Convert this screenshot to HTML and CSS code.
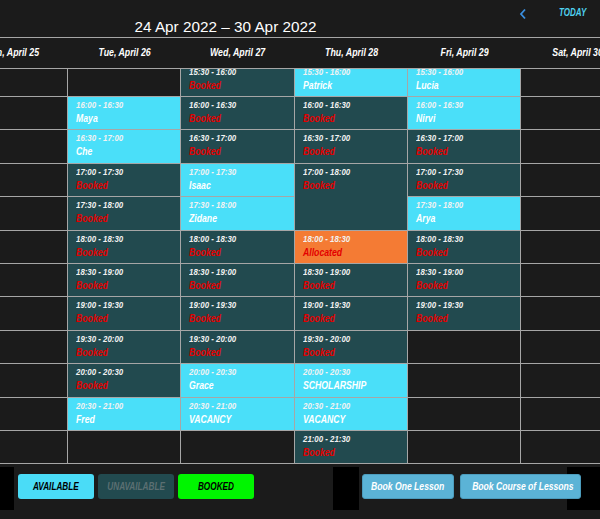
FILE: index.html
```html
<!DOCTYPE html>
<html lang="en">
<head>
    <meta charset="UTF-8">
    <meta name="viewport" content="width=device-width, initial-scale=1.0">
    <title>Lesson Timetable</title>
    <link rel="stylesheet" href="styles.css">
</head>
<body>
    <div class="topbar">
        <h1 class="range">24 Apr 2022 – 30 Apr 2022</h1>
        <div class="nav">
            <svg class="prev" width="8" height="12" viewBox="0 0 8 12">
                <polyline points="6,1.5 2,6 6,10.5" fill="none" stroke="#3a8fe0" stroke-width="1.8"/>
            </svg>
            <span class="today">TODAY</span>
        </div>
    </div>

    <div class="day-header">
        <div class="days">
            <div class="day">Mon, April 25</div>
            <div class="day">Tue, April 26</div>
            <div class="day">Wed, April 27</div>
            <div class="day">Thu, April 28</div>
            <div class="day">Fri, April 29</div>
            <div class="day">Sat, April 30</div>
        </div>
    </div>

    <div class="grid-view">
        <div class="week">
            <!-- Mon -->
            <div class="day-col">
                <div class="slot"></div><div class="slot"></div><div class="slot"></div><div class="slot"></div>
                <div class="slot"></div><div class="slot"></div><div class="slot"></div><div class="slot"></div>
                <div class="slot"></div><div class="slot"></div><div class="slot"></div><div class="slot"></div>
            </div>
            <!-- Tue -->
            <div class="day-col">
                <div class="slot"></div>
                <div class="slot open"><span class="time">16:00 - 16:30</span><span class="who">Maya</span></div>
                <div class="slot open"><span class="time">16:30 - 17:00</span><span class="who">Che</span></div>
                <div class="slot booked"><span class="time">17:00 - 17:30</span><span class="who">Booked</span></div>
                <div class="slot booked"><span class="time">17:30 - 18:00</span><span class="who">Booked</span></div>
                <div class="slot booked"><span class="time">18:00 - 18:30</span><span class="who">Booked</span></div>
                <div class="slot booked"><span class="time">18:30 - 19:00</span><span class="who">Booked</span></div>
                <div class="slot booked"><span class="time">19:00 - 19:30</span><span class="who">Booked</span></div>
                <div class="slot booked"><span class="time">19:30 - 20:00</span><span class="who">Booked</span></div>
                <div class="slot booked"><span class="time">20:00 - 20:30</span><span class="who">Booked</span></div>
                <div class="slot open"><span class="time">20:30 - 21:00</span><span class="who">Fred</span></div>
                <div class="slot"></div>
            </div>
            <!-- Wed -->
            <div class="day-col">
                <div class="slot booked"><span class="time">15:30 - 16:00</span><span class="who">Booked</span></div>
                <div class="slot booked"><span class="time">16:00 - 16:30</span><span class="who">Booked</span></div>
                <div class="slot booked"><span class="time">16:30 - 17:00</span><span class="who">Booked</span></div>
                <div class="slot open"><span class="time">17:00 - 17:30</span><span class="who">Isaac</span></div>
                <div class="slot open"><span class="time">17:30 - 18:00</span><span class="who">Zidane</span></div>
                <div class="slot booked"><span class="time">18:00 - 18:30</span><span class="who">Booked</span></div>
                <div class="slot booked"><span class="time">18:30 - 19:00</span><span class="who">Booked</span></div>
                <div class="slot booked"><span class="time">19:00 - 19:30</span><span class="who">Booked</span></div>
                <div class="slot booked"><span class="time">19:30 - 20:00</span><span class="who">Booked</span></div>
                <div class="slot open"><span class="time">20:00 - 20:30</span><span class="who">Grace</span></div>
                <div class="slot open"><span class="time">20:30 - 21:00</span><span class="who">VACANCY</span></div>
                <div class="slot"></div>
            </div>
            <!-- Thu -->
            <div class="day-col">
                <div class="slot open"><span class="time">15:30 - 16:00</span><span class="who">Patrick</span></div>
                <div class="slot booked"><span class="time">16:00 - 16:30</span><span class="who">Booked</span></div>
                <div class="slot booked"><span class="time">16:30 - 17:00</span><span class="who">Booked</span></div>
                <div class="slot booked span-2"><span class="time">17:00 - 18:00</span><span class="who">Booked</span></div>
                <div class="slot allocated"><span class="time">18:00 - 18:30</span><span class="who">Allocated</span></div>
                <div class="slot booked"><span class="time">18:30 - 19:00</span><span class="who">Booked</span></div>
                <div class="slot booked"><span class="time">19:00 - 19:30</span><span class="who">Booked</span></div>
                <div class="slot booked"><span class="time">19:30 - 20:00</span><span class="who">Booked</span></div>
                <div class="slot open"><span class="time">20:00 - 20:30</span><span class="who">SCHOLARSHIP</span></div>
                <div class="slot open"><span class="time">20:30 - 21:00</span><span class="who">VACANCY</span></div>
                <div class="slot booked"><span class="time">21:00 - 21:30</span><span class="who">Booked</span></div>
            </div>
            <!-- Fri -->
            <div class="day-col">
                <div class="slot open"><span class="time">15:30 - 16:00</span><span class="who">Lucia</span></div>
                <div class="slot open"><span class="time">16:00 - 16:30</span><span class="who">Nirvi</span></div>
                <div class="slot booked"><span class="time">16:30 - 17:00</span><span class="who">Booked</span></div>
                <div class="slot booked"><span class="time">17:00 - 17:30</span><span class="who">Booked</span></div>
                <div class="slot open"><span class="time">17:30 - 18:00</span><span class="who">Arya</span></div>
                <div class="slot booked"><span class="time">18:00 - 18:30</span><span class="who">Booked</span></div>
                <div class="slot booked"><span class="time">18:30 - 19:00</span><span class="who">Booked</span></div>
                <div class="slot booked"><span class="time">19:00 - 19:30</span><span class="who">Booked</span></div>
                <div class="slot"></div><div class="slot"></div><div class="slot"></div><div class="slot"></div>
            </div>
            <!-- Sat -->
            <div class="day-col">
                <div class="slot"></div><div class="slot"></div><div class="slot"></div><div class="slot"></div>
                <div class="slot"></div><div class="slot"></div><div class="slot"></div><div class="slot"></div>
                <div class="slot"></div><div class="slot"></div><div class="slot"></div><div class="slot"></div>
            </div>
        </div>
    </div>

    <div class="footer">
        <div class="legend">
            <div class="block"></div>
            <div class="btn key-available"><span class="label">AVAILABLE</span></div>
            <div class="btn key-unavailable"><span class="label">UNAVAILABLE</span></div>
            <div class="btn key-booked"><span class="label">BOOKED</span></div>
        </div>
        <div class="actions">
            <div class="block mid"></div>
            <button class="btn book one"><span class="label">Book One Lesson</span></button>
            <button class="btn book course"><span class="label">Book Course of Lessons</span></button>
            <div class="block end"></div>
        </div>
    </div>
</body>
</html>
```

FILE: styles.css
```css
body {
    margin: 0;
    width: 600px;
    height: 519px;
    overflow: hidden;
    background: #1b1b1b;
    color: #fff;
    font-family: "Liberation Sans", Arial, sans-serif;
}
.topbar {
    display: flex;
    height: 37px;
}
.range {
    width: 451px;
    margin: 0;
    padding-top: 18px;
    font-size: 15.3px;
    font-weight: normal;
    line-height: 17px;
    text-align: center;
    color: #fff;
}
.nav {
    display: flex;
    align-items: flex-start;
    padding-top: 8px;
}
.prev {
    margin-left: 68px;
}
/* the app font is a condensed face, so squeeze Liberation Sans */
.today {
    display: inline-block;
    margin-left: 32px;
    margin-top: -1px;
    font-size: 10px;
    font-weight: bold;
    font-style: italic;
    color: #4fd2f0;
    transform: scaleX(0.8);
    transform-origin: 0 50%;
}
.day-header {
    height: 30px;
    border-top: 1px solid #a6a6a6;
    border-bottom: 1px solid #a6a6a6;
    overflow: hidden;
}
.days, .week {
    display: grid;
    grid-template-columns: repeat(6, 113.2px);
    margin-left: -45px;
}
.day {
    line-height: 28px;
    text-align: center;
    white-space: nowrap;
    font-size: 10.6px;
    font-weight: bold;
    font-style: italic;
    transform: scaleX(0.83);
}
.grid-view {
    height: 395px;
    overflow: hidden;
}
.week {
    margin-top: -5.4px;
}
.day-col {
    display: grid;
    grid-template-rows: repeat(12, 33.4px);
    border-right: 1px solid #a6a6a6;
}
.slot {
    display: flex;
    flex-direction: column;
    box-sizing: border-box;
    padding: 2px 8px 0;
    border-bottom: 1px solid #a6a6a6;
    overflow: hidden;
    font-weight: bold;
    font-style: italic;
}
.span-2 {
    grid-row: span 2;
}
.time, .who {
    white-space: nowrap;
    transform: scaleX(0.82);
    transform-origin: 0 50%;
}
.time {
    font-size: 9.6px;
    line-height: 12px;
    color: #f2f2f2;
}
.who {
    font-size: 10.6px;
    line-height: 14px;
    color: #fff;
}
.open {
    background: #4adff9;
}
.booked {
    background: #224a4f;
}
.allocated {
    background: #f47b34;
}
.booked .who, .allocated .who {
    color: #e30000;
}
.footer {
    display: flex;
    justify-content: space-between;
    height: 55px;
}
.legend, .actions {
    display: flex;
    align-items: flex-start;
}
.legend {
    gap: 4px;
}
.block {
    width: 14px;
    height: 43px;
    margin-top: 3px;
    background: #000;
}
.block.mid {
    width: 26px;
    margin-right: 3px;
}
.block.end {
    width: 33px;
    margin-left: -14px;
}
.btn {
    box-sizing: border-box;
    width: 76px;
    height: 25px;
    margin-top: 10px;
    border-radius: 3px;
    font-family: "Liberation Sans", Arial, sans-serif;
    font-size: 10px;
    font-weight: bold;
    font-style: italic;
    line-height: 25px;
    text-align: center;
    white-space: nowrap;
}
.label {
    display: inline-block;
    transform: scaleX(0.82);
}
.key-available {
    background: #4adcf7;
    color: #000;
}
.key-unavailable {
    background: #224a4f;
    color: #5b6f72;
}
.key-booked {
    background: #00f500;
    color: #000;
}
.book {
    position: relative;
    z-index: 1;
    padding: 0;
    border: 1px solid #4c9cbd;
    background: #5bb3d6;
    color: #fff;
    font-size: 10.5px;
    line-height: 23px;
    overflow: hidden;
}
.book.one {
    width: 92px;
}
.book.course {
    width: 121px;
    margin-left: 6px;
}
```
